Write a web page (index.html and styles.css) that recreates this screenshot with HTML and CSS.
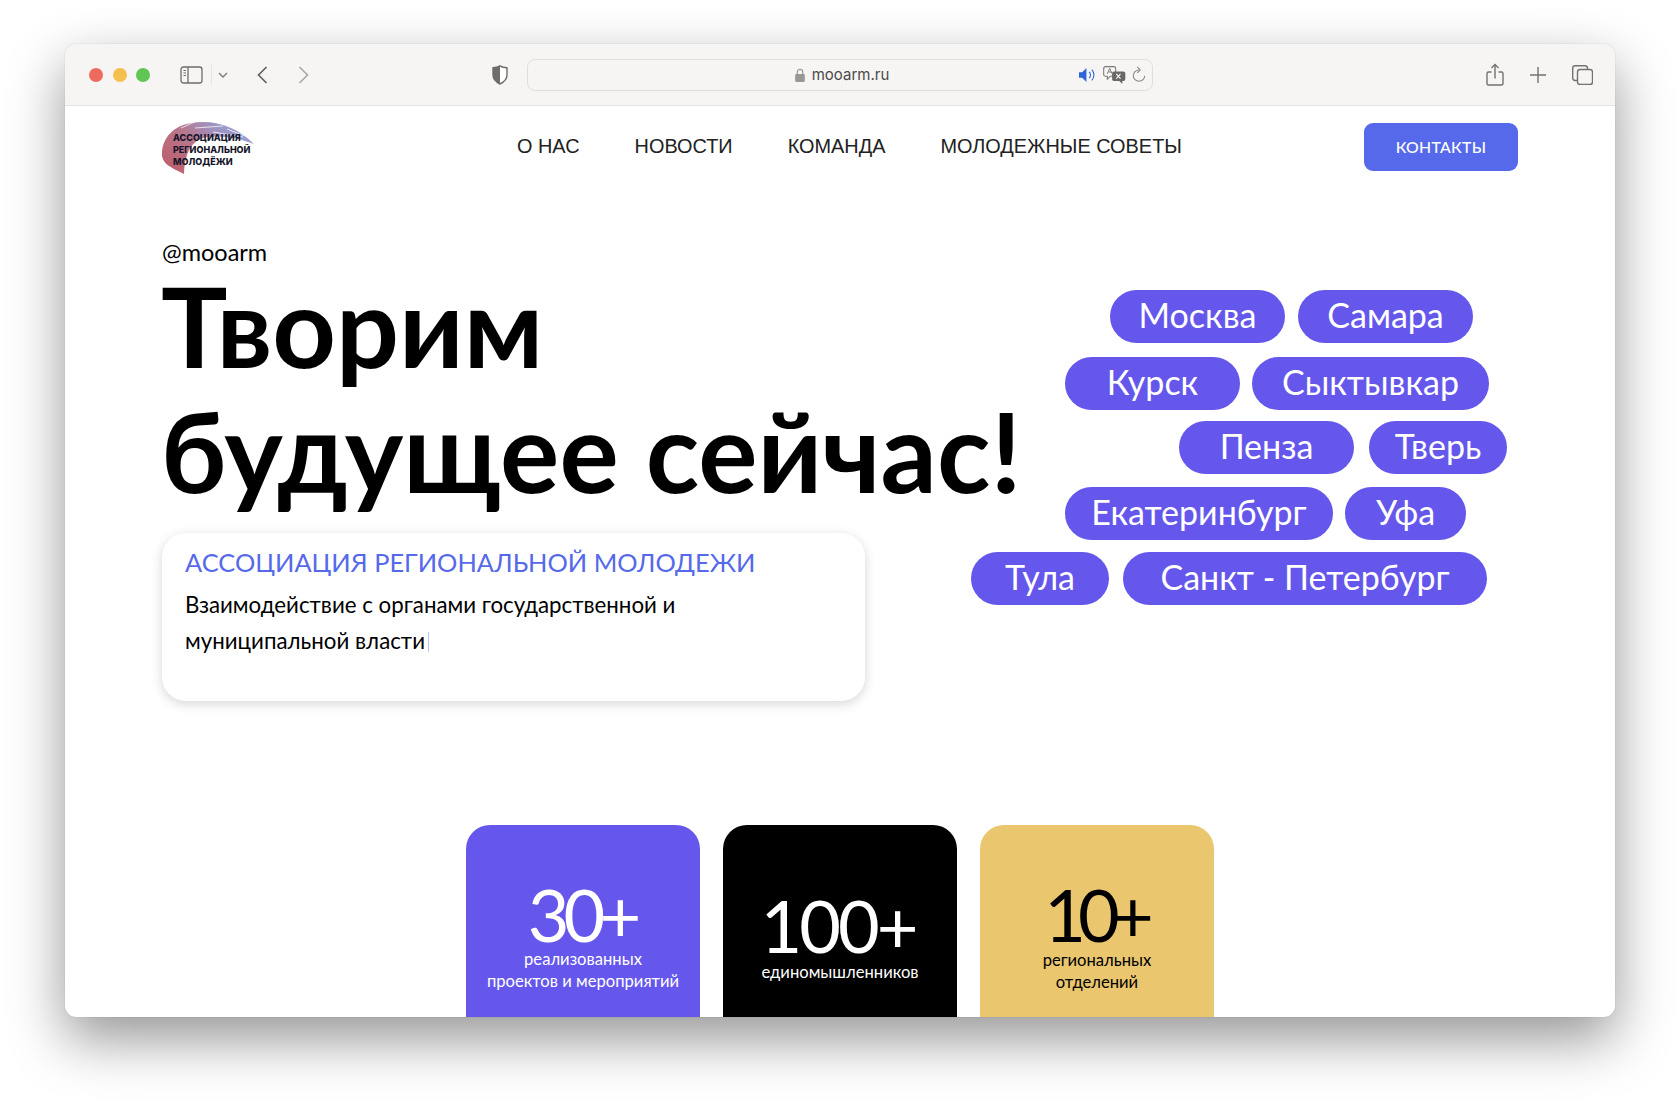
FILE: index.html
```html
<!DOCTYPE html>
<html lang="ru">
<head>
<meta charset="utf-8">
<title>mooarm.ru</title>
<link rel="stylesheet" href="styles.css">
</head>
<body>
<div class="window">
  <header class="toolbar">
    <div class="lights"><i class="light red"></i><i class="light yellow"></i><i class="light green"></i></div>
    <svg class="ic-sidebar" width="24" height="18" viewBox="0 0 24 18" fill="none" stroke="#6f6d6a" stroke-width="1.3"><rect x="1" y="1" width="21" height="16" rx="2.5"/><path d="M8 1v16"/><path d="M3.5 4.5h2.5M3.5 7h2.5M3.5 9.5h2.500" stroke-width="1"/></svg>
    <span class="divider"></span>
    <svg class="ic-chev" width="10" height="6" viewBox="0 0 10 6" fill="none" stroke="#7c7a77" stroke-width="1.4"><path d="M1 1l4 4 4-4"/></svg>
    <svg class="ic-back" width="11" height="18" viewBox="0 0 11 18" fill="none" stroke="#5f5d5a" stroke-width="1.6"><path d="M9.500 1L1.500 9l8 8"/></svg>
    <svg class="ic-fwd" width="11" height="18" viewBox="0 0 11 18" fill="none" stroke="#a9a7a4" stroke-width="1.6"><path d="M1.500 1l8 8-8 8"/></svg>
    <svg class="ic-shield" width="16" height="20" viewBox="0 0 16 20"><path d="M8 1C6 2 3.500 2.600 1 2.800V10c0 4 3 7 7 9 4-2 7-5 7-9V2.800C12.500 2.600 10 2 8 1z" fill="#fff" stroke="#6f6d6a" stroke-width="1.400"/><path d="M8 1C6 2 3.500 2.600 1 2.800V10c0 4 3 7 7 9z" fill="#6f6d6a"/></svg>
    <div class="address">
      <svg class="ic-lock" width="10" height="14" viewBox="0 0 9 13"><path d="M2 6V3.700a2.500 2.500 0 0 1 5 0V6" fill="none" stroke="#9a9896" stroke-width="1.100"/><rect y="5.500" width="9" height="7.500" rx="1.200" fill="#9a9896"/></svg>
      <span class="url">mooarm.ru</span>
      <div class="address-icons">
        <svg width="18" height="14" viewBox="0 0 17 13"><path d="M0 4h3l4-4v13l-4-4H0z" fill="#2a66d9"/><path d="M9.500 3.500a4 4 0 0 1 0 6M12 1.500a7 7 0 0 1 0 10" fill="none" stroke="#2a66d9" stroke-width="1"/></svg>
        <svg width="23" height="18" viewBox="0 0 19 15"><path d="M2 .5h7a1.500 1.500 0 0 1 1.500 1.500v5a1.500 1.500 0 0 1-1.500 1.500H6l-2.500 2.500V8.500H2A1.500 1.500 0 0 1 .5 7V2A1.500 1.500 0 0 1 2 .5z" fill="#f6f5f3" stroke="#7a7876" stroke-width=".9"/><path d="M3.500 6.500l2-4.500 2 4.500M4.300 5h2.400" fill="none" stroke="#7a7876" stroke-width=".8"/><path d="M9 4.500h8a1.500 1.500 0 0 1 1.500 1.500v5a1.500 1.500 0 0 1-1.500 1.500h-1v2.500L13.500 12.500H9A1.500 1.500 0 0 1 7.500 11V6A1.500 1.500 0 0 1 9 4.500z" fill="#6a6866"/><path d="M11 6.500l3.500 4M14.500 6.500l-3.500 4" stroke="#fff" stroke-width=".9"/></svg>
        <svg width="14" height="17" viewBox="0 0 12 15" fill="none" stroke="#8a8886" stroke-width="1"><path d="M6 3.500a5 5 0 1 0 5 5"/><path d="M4.500 .8L7 3.500 4.500 6"/></svg>
      </div>
    </div>
    <div class="actions">
      <svg width="18" height="24" viewBox="0 0 18 24" fill="none" stroke="#74726f" stroke-width="1.400"><path d="M5.500 9H2.500A1.500 1.500 0 0 0 1 10.500v10A1.500 1.500 0 0 0 2.500 22h13a1.500 1.500 0 0 0 1.500-1.500v-10A1.500 1.500 0 0 0 15.500 9h-3"/><path d="M9 15.500V1.500M5.500 5L9 1.500 12.500 5"/></svg>
      <svg width="16" height="16" viewBox="0 0 16 16" fill="none" stroke="#74726f" stroke-width="1.400"><path d="M8 0v16M0 8h16"/></svg>
      <svg width="21" height="20" viewBox="0 0 21 20" fill="none" stroke="#74726f" stroke-width="1.400"><rect x="5.500" y="4.500" width="15" height="15" rx="2.500"/><path d="M5.500 15.500H3A2.500 2.500 0 0 1 .7 13V3A2.500 2.500 0 0 1 3 .7h10A2.500 2.500 0 0 1 15.500 3v1.500"/></svg>
    </div>
  </header>
  <main class="page">
    <nav class="nav">
      <div class="logo">
        <svg class="logo-brush" width="94" height="56" viewBox="0 0 94 56">
          <defs><linearGradient id="brush" x1="0" y1=".8" x2="1" y2=".2"><stop offset="0" stop-color="#bd5f6b"/><stop offset=".45" stop-color="#b7788f"/><stop offset=".75" stop-color="#9c95c4"/><stop offset="1" stop-color="#9aa3dc"/></linearGradient></defs>
          <path d="M1 33C2 19 12 7 30 4 54 0 76 8 93 25 78 19 62 16 46 18 30 21 24 34 23 55L17 52C7 47 0 43 1 33z" fill="url(#brush)"/>
          <path d="M20 9L38 1M34 9L62 7M52 13L82 18M66 10L84 17" stroke="#fff" stroke-width="1" fill="none" opacity=".75"/>
        </svg>
        <div class="logo-text">АССОЦИАЦИЯ<br>РЕГИОНАЛЬНОЙ<br>МОЛОДЁЖИ</div>
      </div>
      <ul class="menu">
        <li>О НАС</li>
        <li>НОВОСТИ</li>
        <li>КОМАНДА</li>
        <li>МОЛОДЕЖНЫЕ СОВЕТЫ</li>
      </ul>
      <a class="contact">КОНТАКТЫ</a>
    </nav>
    <section class="hero">
      <div class="hero-left">
        <div class="handle">@mooarm</div>
        <h1 class="title">Творим<br>будущее сейчас!</h1>
        <div class="card">
          <div class="card-title">АССОЦИАЦИЯ РЕГИОНАЛЬНОЙ МОЛОДЕЖИ</div>
          <p class="card-text">Взаимодействие с органами государственной и муниципальной власти<span class="caret"></span></p>
        </div>
      </div>
      <div class="cities">
        <div class="row row-1"><span class="pill w-moskva">Москва</span><span class="pill w-samara">Самара</span></div>
        <div class="row row-2"><span class="pill w-kursk">Курск</span><span class="pill w-syk">Сыктывкар</span></div>
        <div class="row row-3"><span class="pill w-penza">Пенза</span><span class="pill w-tver">Тверь</span></div>
        <div class="row row-4"><span class="pill w-ekb">Екатеринбург</span><span class="pill w-ufa">Уфа</span></div>
        <div class="row row-5"><span class="pill w-tula">Тула</span><span class="pill w-spb">Санкт - Петербург</span></div>
      </div>
    </section>
    <section class="stats">
      <div class="stat stat-violet"><div class="num">30+</div><div class="lbl">реализованных<br>проектов и мероприятий</div></div>
      <div class="stat stat-black"><div class="num">100+</div><div class="lbl">единомышленников</div></div>
      <div class="stat stat-gold"><div class="num">10+</div><div class="lbl">региональных<br>отделений</div></div>
    </section>
  </main>
</div>
</body>
</html>
```
FILE: styles.css
```css
* { box-sizing: border-box; }
html, body { margin: 0; height: 1104px; overflow: hidden; background: #fff; }
body { padding: 44px 65px 0; font-family: "Lato", "Noto Sans", sans-serif; color: #000; }
.window { width: 1550px; height: 973px; border-radius: 11px; overflow: hidden; background: #fff; box-shadow: 0 22px 55px rgba(0,0,0,.42), 0 0 1px rgba(0,0,0,.3); }
.toolbar { height: 62px; background: #f6f5f3; border-bottom: 1px solid #e3e2e0; display: flex; align-items: center; padding: 0 22px 0 24px; }
.lights { display: flex; gap: 9.5px; }
.light { width: 14px; height: 14px; border-radius: 50%; }
.red { background: #ee6a5f; } .yellow { background: #f5bf4f; } .green { background: #61c554; }
.ic-sidebar { margin-left: 30px; }
.divider { width: 1px; height: 20px; margin-left: 7px; background: #e6e5e3; }
.ic-chev { margin-left: 6px; }
.ic-back { margin-left: 29px; }
.ic-fwd { margin-left: 30px; }
.ic-shield { margin-left: 183px; }
.address { margin-left: 19px; width: 626px; height: 32px; border: 1px solid #e0dfdd; border-radius: 8px; background: #f6f5f3; display: flex; align-items: center; justify-content: center; padding-left: 4px; position: relative; }
.ic-lock { margin-right: 7px; }
.url { font-family: "Inter", sans-serif; font-size: 15px; color: #4b4a48; }
.address-icons { position: absolute; right: 6px; top: 6px; display: flex; gap: 6px; align-items: center; }
.actions { margin-left: auto; display: flex; gap: 26px; align-items: center; }
.page { padding: 0 97px; }
.nav { height: 82px; display: flex; align-items: center; }
.logo { width: 94px; height: 56px; margin-left: -1px; position: relative; }
.logo-brush { display: block; }
.logo-text { position: absolute; left: 12px; top: 13px; font-family: "Inter", sans-serif; font-size: 9px; font-weight: 800; line-height: 12px; color: #16162a; white-space: nowrap; }
.menu { list-style: none; margin: -2px 0 0 262px; padding: 0; display: flex; gap: 55px; font-family: "Liberation Sans", sans-serif; font-size: 19.9px; color: #222; white-space: nowrap; }
.contact { margin-left: auto; width: 154px; height: 48px; padding-bottom: 2px; border-radius: 9px; background: #5569ea; color: #fff; font-size: 15.8px; font-weight: 500; letter-spacing: .3px; display: flex; align-items: center; justify-content: center; }
.hero { display: flex; height: 591px; position: relative; }
.hero-left { width: 880px; padding-top: 49px; }
.handle { font-size: 23.5px; line-height: 30px; }
.title { margin: -4px 0 0 -1px; font-size: 111px; line-height: 125px; font-weight: 700; white-space: nowrap; }
.card { margin-top: 20px; width: 703px; height: 168px; border-radius: 24px; background: #fff; box-shadow: 0 3px 12px rgba(0,0,0,.16); padding: 13px 23px; }
.card-title { font-size: 25.4px; line-height: 32px; color: #5569ea; }
.card-text { margin: 9px 0 0; width: 520px; font-size: 22.3px; line-height: 36px; }
.caret { display: inline-block; width: 1px; height: 20px; margin-left: 3px; vertical-align: -3px; background: #b9c1f5; }
.cities { position: absolute; left: 809px; top: 102px; }
.row { display: flex; height: 53px; }
.row-1 { margin-left: 139px; gap: 13px; }
.row-2 { margin-left: 94px; margin-top: 14px; gap: 12px; }
.row-3 { margin-left: 208px; margin-top: 11px; gap: 15px; }
.row-4 { margin-left: 94px; margin-top: 13px; gap: 12px; }
.row-5 { margin-top: 12px; gap: 14px; }
.pill { height: 53px; padding-bottom: 4px; border-radius: 27px; background: #6557ec; color: #fff; font-size: 34px; display: flex; align-items: center; justify-content: center; white-space: nowrap; }
.w-moskva, .w-samara, .w-kursk, .w-penza { width: 175px; }
.w-syk { width: 237px; } .w-tver { width: 138px; } .w-ekb { width: 268px; } .w-ufa { width: 121px; } .w-tula { width: 138px; } .w-spb { width: 364px; }
.stats { display: flex; justify-content: center; gap: 23px; margin-top: 46px; }
.stat { width: 234px; height: 260px; border-radius: 24px; display: flex; flex-direction: column; align-items: center; text-align: center; }
.stat .num { font-size: 72px; font-weight: 400; }
.stat .lbl { font-size: 16.6px; line-height: 22px; }
.stat-violet { background: #6557ec; color: #fff; padding-top: 56px; }
.stat-violet .num { letter-spacing: -6px; line-height: 67px; margin-left: -3px; }
.stat-black { background: #000; color: #fff; padding-top: 65px; }
.stat-black .num { letter-spacing: -3px; line-height: 71px; margin-left: -4px; }
.stat-gold { background: #eac76f; color: #000; padding-top: 54px; }
.stat-gold .num { letter-spacing: -8px; line-height: 70px; margin-left: -4px; }
```
